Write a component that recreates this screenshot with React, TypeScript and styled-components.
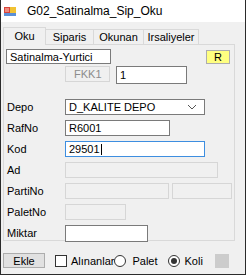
import React from "react";
import styled, { createGlobalStyle } from "styled-components";

const GlobalStyle = createGlobalStyle`
  body {
    margin: 0;
    background: #ffffff;
    font-family: "Liberation Sans", Arial, sans-serif;
    color: #000;
  }
`;

const Window = styled.div`
  width: 246px;
  height: 275px;
  box-sizing: border-box;
  border: 1px solid #2b2b2b;
  border-top: none;
  background: #f0f0f0;
  display: flex;
  flex-direction: column;
`;

const TitleBar = styled.div`
  height: 22px;
  flex: none;
  background: #ffffff;
  display: flex;
  align-items: center;
  gap: 11px;
  padding-left: 3px;
  font-size: 12px;
`;

const TabStrip = styled.div`
  display: flex;
  align-items: flex-end;
  height: 18px;
  margin-top: 4px;
  padding-left: 2px;
`;

const Tab = styled.div<{ $w: number; $active?: boolean }>`
  width: ${(p) => p.$w}px;
  height: ${(p) => (p.$active ? 18 : 15)}px;
  box-sizing: border-box;
  border: 1px solid #d9d9d9;
  border-bottom: none;
  margin-left: ${(p) => (p.$active ? 0 : -1)}px;
  background: ${(p) => (p.$active ? "#f0f0f0" : "#f0f0f0")};
  font-size: 11px;
  display: flex;
  align-items: center;
  justify-content: center;
  position: relative;
  z-index: ${(p) => (p.$active ? 1 : 0)};
  margin-bottom: ${(p) => (p.$active ? -1 : 0)}px;
  padding-bottom: ${(p) => (p.$active ? 1 : 0)}px;
`;

const Panel = styled.div`
  margin-left: 2px;
  width: 232px;
  height: 197px;
  box-sizing: border-box;
  border: 1px solid #d9d9d9;
  padding: 4px 2px 0 2px;
  display: flex;
  flex-direction: column;
`;

const TopRow = styled.div`
  display: flex;
  align-items: center;
  justify-content: space-between;
  padding-right: 2px;
`;

const Field = styled.div<{ $w: number; $h?: number; $tone?: "white" | "disabled" | "focus" }>`
  width: ${(p) => p.$w}px;
  height: ${(p) => p.$h ?? 16}px;
  box-sizing: border-box;
  flex: none;
  border: 1px solid
    ${(p) => (p.$tone === "focus" ? "#3d8ee0" : p.$tone === "disabled" ? "#d6d6d6" : "#7a7a7a")};
  background: ${(p) => (p.$tone === "disabled" ? "#f0f0f0" : "#ffffff")};
  font-size: 11px;
  line-height: 14px;
  padding-left: 3px;
  display: flex;
  align-items: center;
  white-space: nowrap;
  overflow: hidden;
`;

const RButton = styled.div`
  width: 24px;
  height: 14px;
  box-sizing: border-box;
  border: 1px solid #adadad;
  background: #ffff80;
  font-size: 11px;
  display: flex;
  align-items: center;
  justify-content: center;
`;

const FkkRow = styled.div`
  display: flex;
  align-items: flex-start;
  margin-top: 2px;
  padding-left: 59px;
  gap: 6px;
`;

const FkkLabel = styled.div`
  width: 45px;
  height: 16px;
  box-sizing: border-box;
  border: 1px solid #d6d6d6;
  font-size: 11px;
  color: #8c8c8c;
  display: flex;
  align-items: center;
  padding-left: 8px;
`;

const Form = styled.div`
  display: grid;
  grid-template-columns: 59px auto;
  grid-auto-rows: 16px;
  row-gap: 5px;
  margin-top: 15px;
  align-items: center;
`;

const Label = styled.div`
  font-size: 11px;
  padding-left: 1px;
`;

const Pair = styled.div`
  display: flex;
  gap: 3px;
`;

const Select = styled(Field)`
  justify-content: space-between;
  padding-right: 7px;
`;

const Caret = styled.span`
  width: 10px;
  height: 6px;
  display: flex;
`;

const Cursor = styled.span`
  display: inline-block;
  width: 1px;
  height: 11px;
  background: #000;
  margin-left: 1px;
`;

const BottomBar = styled.div`
  display: flex;
  align-items: center;
  padding-left: 2px;
  margin-top: 12px;
`;

const Button = styled.div`
  width: 42px;
  height: 15px;
  box-sizing: border-box;
  border: 1px solid #adadad;
  background: #e1e1e1;
  font-size: 11px;
  display: flex;
  align-items: center;
  justify-content: center;
`;

const Check = styled.div`
  width: 12px;
  height: 12px;
  box-sizing: border-box;
  border: 1px solid #333;
  background: #fff;
  margin-left: 10px;
`;

const OptText = styled.span<{ $ml: number }>`
  font-size: 11px;
  margin-left: ${(p) => p.$ml}px;
`;

const Radio = styled.div<{ $on?: boolean; $ml: number }>`
  width: 12px;
  height: 12px;
  box-sizing: border-box;
  border-radius: 50%;
  border: 1px solid #333;
  background: #fff;
  margin-left: ${(p) => p.$ml}px;
  display: flex;
  align-items: center;
  justify-content: center;
  &::after {
    content: "";
    width: 6px;
    height: 6px;
    border-radius: 50%;
    background: ${(p) => (p.$on ? "#333" : "transparent")};
  }
`;

const GraySquare = styled.div`
  width: 14px;
  height: 14px;
  background: #cccccc;
  margin-left: 12px;
`;

function AppIcon() {
  return (
    <svg width="12" height="11" viewBox="0 0 12 11">
      <rect x="0" y="1" width="6" height="6" fill="#d8443a" />
      <rect x="6" y="1" width="6" height="6" fill="#f1c232" />
      <rect x="0" y="7" width="12" height="3" fill="#5b8fd6" />
      <rect x="1" y="2" width="4" height="4" fill="#ef8a7e" />
    </svg>
  );
}

export default function App() {
  return (
    <>
      <GlobalStyle />
      <Window>
        <TitleBar>
          <AppIcon />
          <span>G02_Satinalma_Sip_Oku</span>
        </TitleBar>
        <TabStrip>
          <Tab $w={43} $active>
            Oku
          </Tab>
          <Tab $w={49}>Siparis</Tab>
          <Tab $w={51}>Okunan</Tab>
          <Tab $w={56}>Irsaliyeler</Tab>
        </TabStrip>
        <Panel>
          <TopRow>
            <Field $w={105} $h={15}>
              Satinalma-Yurtici
            </Field>
            <RButton>R</RButton>
          </TopRow>
          <FkkRow>
            <FkkLabel>FKK1</FkkLabel>
            <Field $w={71} $h={18}>
              1
            </Field>
          </FkkRow>
          <Form>
            <Label>Depo</Label>
            <Select $w={140}>
              D_KALITE DEPO
              <Caret>
                <svg width="10" height="6" viewBox="0 0 10 6">
                  <path d="M1 1l4 4 4-4" fill="none" stroke="#555" strokeWidth="1" />
                </svg>
              </Caret>
            </Select>
            <Label>RafNo</Label>
            <Field $w={105}>R6001</Field>
            <Label>Kod</Label>
            <Field $w={140} $tone="focus">
              29501
              <Cursor />
            </Field>
            <Label>Ad</Label>
            <Field $w={153} $tone="disabled" />
            <Label>PartiNo</Label>
            <Pair>
              <Field $w={104} $tone="disabled" />
              <Field $w={60} $tone="disabled" />
            </Pair>
            <Label>PaletNo</Label>
            <Field $w={61} $tone="disabled" />
            <Label>Miktar</Label>
            <Field $w={83} $h={17} />
          </Form>
        </Panel>
        <BottomBar>
          <Button>Ekle</Button>
          <Check />
          <OptText $ml={4}>Alınanlar</OptText>
          <Radio $ml={0} />
          <OptText $ml={6}>Palet</OptText>
          <Radio $ml={10} $on />
          <OptText $ml={5}>Koli</OptText>
          <GraySquare />
        </BottomBar>
      </Window>
    </>
  );
}
